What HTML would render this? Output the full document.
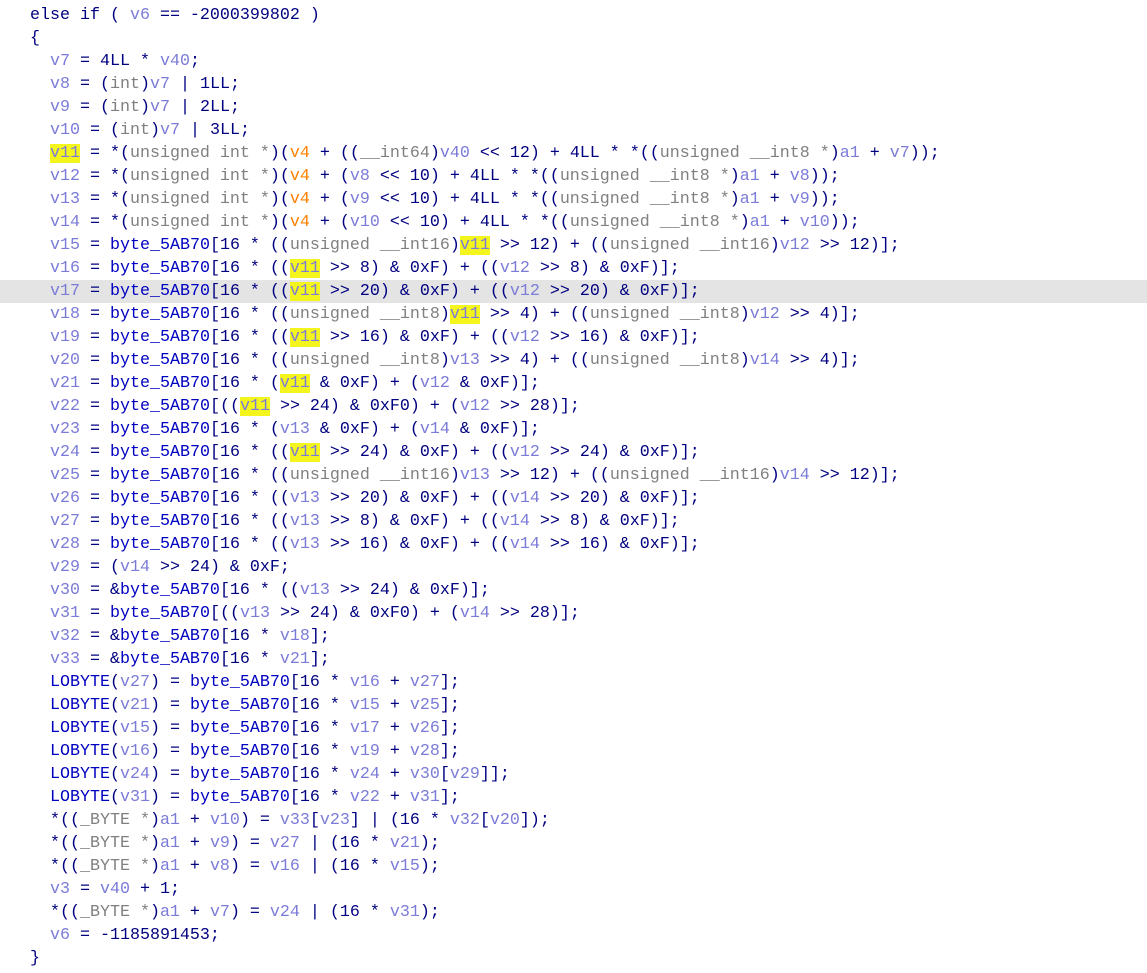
<!DOCTYPE html>
<html><head><meta charset="utf-8"><style>
html,body{margin:0;padding:0;background:#fff;width:1147px;height:973px;overflow:hidden}
pre{margin:0;position:absolute;top:-19px;left:0;width:1147px;font-family:"Liberation Mono",monospace;font-size:16.67px;line-height:23px;color:#000080;white-space:pre}
.r{display:block;padding-left:10px;height:23px}
.sel{background:#e4e4e4}
.l{color:#7b7bd8}.t{color:#808080}.g{color:#0000c0}.o{color:#ff8000}
.h{background:#f5f51e;color:#7b7bd8}
</style></head><body><pre>
<span class="r">  }</span><span class="r">  else if ( <span class="l">v6</span> == -2000399802 )</span><span class="r">  {</span><span class="r">    <span class="l">v7</span> = 4LL * <span class="l">v40</span>;</span><span class="r">    <span class="l">v8</span> = (<span class="t">int</span>)<span class="l">v7</span> | 1LL;</span><span class="r">    <span class="l">v9</span> = (<span class="t">int</span>)<span class="l">v7</span> | 2LL;</span><span class="r">    <span class="l">v10</span> = (<span class="t">int</span>)<span class="l">v7</span> | 3LL;</span><span class="r">    <span class="h">v11</span> = *(<span class="t">unsigned int *</span>)(<span class="o">v4</span> + ((<span class="t">__int64</span>)<span class="l">v40</span> &lt;&lt; 12) + 4LL * *((<span class="t">unsigned __int8 *</span>)<span class="l">a1</span> + <span class="l">v7</span>));</span><span class="r">    <span class="l">v12</span> = *(<span class="t">unsigned int *</span>)(<span class="o">v4</span> + (<span class="l">v8</span> &lt;&lt; 10) + 4LL * *((<span class="t">unsigned __int8 *</span>)<span class="l">a1</span> + <span class="l">v8</span>));</span><span class="r">    <span class="l">v13</span> = *(<span class="t">unsigned int *</span>)(<span class="o">v4</span> + (<span class="l">v9</span> &lt;&lt; 10) + 4LL * *((<span class="t">unsigned __int8 *</span>)<span class="l">a1</span> + <span class="l">v9</span>));</span><span class="r">    <span class="l">v14</span> = *(<span class="t">unsigned int *</span>)(<span class="o">v4</span> + (<span class="l">v10</span> &lt;&lt; 10) + 4LL * *((<span class="t">unsigned __int8 *</span>)<span class="l">a1</span> + <span class="l">v10</span>));</span><span class="r">    <span class="l">v15</span> = <span class="g">byte_5AB70</span>[16 * ((<span class="t">unsigned __int16</span>)<span class="h">v11</span> &gt;&gt; 12) + ((<span class="t">unsigned __int16</span>)<span class="l">v12</span> &gt;&gt; 12)];</span><span class="r">    <span class="l">v16</span> = <span class="g">byte_5AB70</span>[16 * ((<span class="h">v11</span> &gt;&gt; 8) &amp; 0xF) + ((<span class="l">v12</span> &gt;&gt; 8) &amp; 0xF)];</span><span class="r sel">    <span class="l">v17</span> = <span class="g">byte_5AB70</span>[16 * ((<span class="h">v11</span> &gt;&gt; 20) &amp; 0xF) + ((<span class="l">v12</span> &gt;&gt; 20) &amp; 0xF)];</span><span class="r">    <span class="l">v18</span> = <span class="g">byte_5AB70</span>[16 * ((<span class="t">unsigned __int8</span>)<span class="h">v11</span> &gt;&gt; 4) + ((<span class="t">unsigned __int8</span>)<span class="l">v12</span> &gt;&gt; 4)];</span><span class="r">    <span class="l">v19</span> = <span class="g">byte_5AB70</span>[16 * ((<span class="h">v11</span> &gt;&gt; 16) &amp; 0xF) + ((<span class="l">v12</span> &gt;&gt; 16) &amp; 0xF)];</span><span class="r">    <span class="l">v20</span> = <span class="g">byte_5AB70</span>[16 * ((<span class="t">unsigned __int8</span>)<span class="l">v13</span> &gt;&gt; 4) + ((<span class="t">unsigned __int8</span>)<span class="l">v14</span> &gt;&gt; 4)];</span><span class="r">    <span class="l">v21</span> = <span class="g">byte_5AB70</span>[16 * (<span class="h">v11</span> &amp; 0xF) + (<span class="l">v12</span> &amp; 0xF)];</span><span class="r">    <span class="l">v22</span> = <span class="g">byte_5AB70</span>[((<span class="h">v11</span> &gt;&gt; 24) &amp; 0xF0) + (<span class="l">v12</span> &gt;&gt; 28)];</span><span class="r">    <span class="l">v23</span> = <span class="g">byte_5AB70</span>[16 * (<span class="l">v13</span> &amp; 0xF) + (<span class="l">v14</span> &amp; 0xF)];</span><span class="r">    <span class="l">v24</span> = <span class="g">byte_5AB70</span>[16 * ((<span class="h">v11</span> &gt;&gt; 24) &amp; 0xF) + ((<span class="l">v12</span> &gt;&gt; 24) &amp; 0xF)];</span><span class="r">    <span class="l">v25</span> = <span class="g">byte_5AB70</span>[16 * ((<span class="t">unsigned __int16</span>)<span class="l">v13</span> &gt;&gt; 12) + ((<span class="t">unsigned __int16</span>)<span class="l">v14</span> &gt;&gt; 12)];</span><span class="r">    <span class="l">v26</span> = <span class="g">byte_5AB70</span>[16 * ((<span class="l">v13</span> &gt;&gt; 20) &amp; 0xF) + ((<span class="l">v14</span> &gt;&gt; 20) &amp; 0xF)];</span><span class="r">    <span class="l">v27</span> = <span class="g">byte_5AB70</span>[16 * ((<span class="l">v13</span> &gt;&gt; 8) &amp; 0xF) + ((<span class="l">v14</span> &gt;&gt; 8) &amp; 0xF)];</span><span class="r">    <span class="l">v28</span> = <span class="g">byte_5AB70</span>[16 * ((<span class="l">v13</span> &gt;&gt; 16) &amp; 0xF) + ((<span class="l">v14</span> &gt;&gt; 16) &amp; 0xF)];</span><span class="r">    <span class="l">v29</span> = (<span class="l">v14</span> &gt;&gt; 24) &amp; 0xF;</span><span class="r">    <span class="l">v30</span> = &amp;<span class="g">byte_5AB70</span>[16 * ((<span class="l">v13</span> &gt;&gt; 24) &amp; 0xF)];</span><span class="r">    <span class="l">v31</span> = <span class="g">byte_5AB70</span>[((<span class="l">v13</span> &gt;&gt; 24) &amp; 0xF0) + (<span class="l">v14</span> &gt;&gt; 28)];</span><span class="r">    <span class="l">v32</span> = &amp;<span class="g">byte_5AB70</span>[16 * <span class="l">v18</span>];</span><span class="r">    <span class="l">v33</span> = &amp;<span class="g">byte_5AB70</span>[16 * <span class="l">v21</span>];</span><span class="r">    <span class="g">LOBYTE</span>(<span class="l">v27</span>) = <span class="g">byte_5AB70</span>[16 * <span class="l">v16</span> + <span class="l">v27</span>];</span><span class="r">    <span class="g">LOBYTE</span>(<span class="l">v21</span>) = <span class="g">byte_5AB70</span>[16 * <span class="l">v15</span> + <span class="l">v25</span>];</span><span class="r">    <span class="g">LOBYTE</span>(<span class="l">v15</span>) = <span class="g">byte_5AB70</span>[16 * <span class="l">v17</span> + <span class="l">v26</span>];</span><span class="r">    <span class="g">LOBYTE</span>(<span class="l">v16</span>) = <span class="g">byte_5AB70</span>[16 * <span class="l">v19</span> + <span class="l">v28</span>];</span><span class="r">    <span class="g">LOBYTE</span>(<span class="l">v24</span>) = <span class="g">byte_5AB70</span>[16 * <span class="l">v24</span> + <span class="l">v30</span>[<span class="l">v29</span>]];</span><span class="r">    <span class="g">LOBYTE</span>(<span class="l">v31</span>) = <span class="g">byte_5AB70</span>[16 * <span class="l">v22</span> + <span class="l">v31</span>];</span><span class="r">    *((<span class="t">_BYTE *</span>)<span class="l">a1</span> + <span class="l">v10</span>) = <span class="l">v33</span>[<span class="l">v23</span>] | (16 * <span class="l">v32</span>[<span class="l">v20</span>]);</span><span class="r">    *((<span class="t">_BYTE *</span>)<span class="l">a1</span> + <span class="l">v9</span>) = <span class="l">v27</span> | (16 * <span class="l">v21</span>);</span><span class="r">    *((<span class="t">_BYTE *</span>)<span class="l">a1</span> + <span class="l">v8</span>) = <span class="l">v16</span> | (16 * <span class="l">v15</span>);</span><span class="r">    <span class="l">v3</span> = <span class="l">v40</span> + 1;</span><span class="r">    *((<span class="t">_BYTE *</span>)<span class="l">a1</span> + <span class="l">v7</span>) = <span class="l">v24</span> | (16 * <span class="l">v31</span>);</span><span class="r">    <span class="l">v6</span> = -1185891453;</span><span class="r">  }</span></pre>
</body></html>
